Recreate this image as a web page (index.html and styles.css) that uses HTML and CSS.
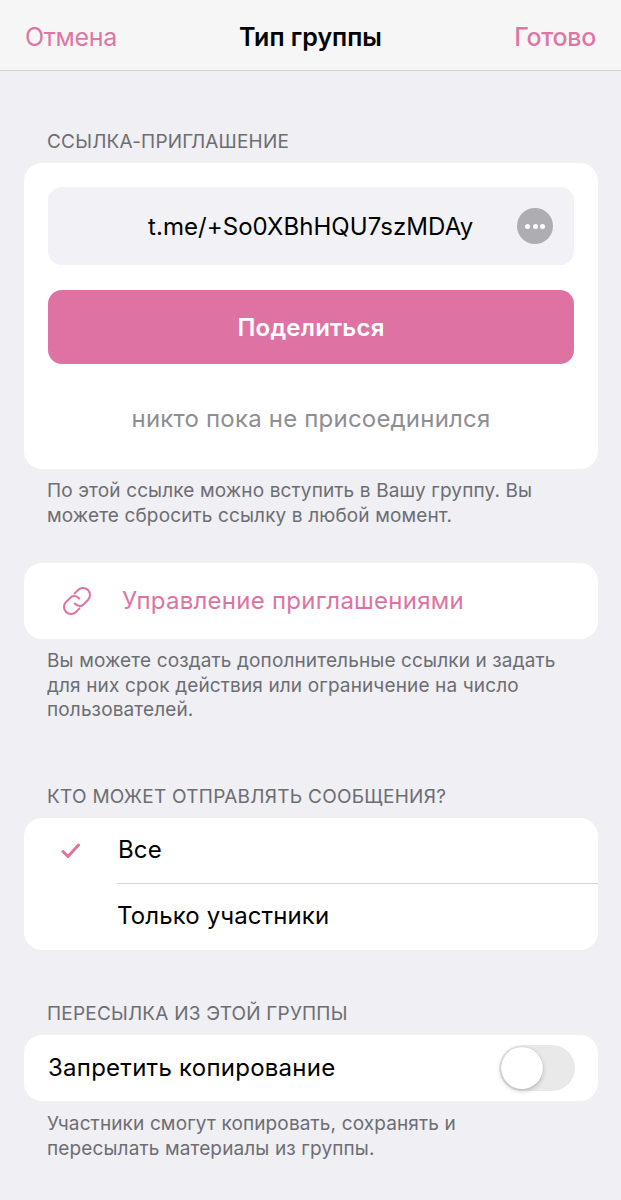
FILE: index.html
```html
<!DOCTYPE html>
<html lang="ru">
<head>
    <meta charset="UTF-8">
    <meta name="viewport" content="width=device-width, initial-scale=1.0">
    <title>Тип группы</title>
    <link rel="stylesheet" href="styles.css">
</head>
<body>
    <header class="nav-bar">
        <a class="nav-link">Отмена</a>
        <h1 class="nav-title">Тип группы</h1>
        <a class="nav-link nav-done">Готово</a>
    </header>

    <main class="content">
        <h2 class="section-label label-invite">ССЫЛКА-ПРИГЛАШЕНИЕ</h2>
        <section class="card invite-card">
            <div class="link-field">
                <span class="link-text">t.me/+So0XBhHQU7szMDAy</span>
                <span class="more-btn"><i></i><i></i><i></i></span>
            </div>
            <button class="share-btn">Поделиться</button>
            <p class="invite-status">никто пока не присоединился</p>
        </section>
        <p class="section-note note-invite">По этой ссылке можно вступить в Вашу группу. Вы<br>можете сбросить ссылку в любой момент.</p>

        <section class="card manage-row">
            <svg class="link-icon" width="30" height="30" viewBox="0 0 30 30" fill="none">
                <path d="M12.5 7.6 L16.05 4.05 A7 7 0 0 1 25.95 13.95 L20.45 19.45 A7 7 0 0 1 12.8 17.5"/>
                <path d="M17.5 22.4 L13.95 25.95 A7 7 0 0 1 4.05 16.05 L9.55 10.55 A7 7 0 0 1 17.2 12.5"/>
            </svg>
            <span class="manage-text">Управление приглашениями</span>
        </section>
        <p class="section-note note-manage">Вы можете создать дополнительные ссылки и задать<br>для них срок действия или ограничение на число<br>пользователей.</p>

        <h2 class="section-label label-who">КТО МОЖЕТ ОТПРАВЛЯТЬ СООБЩЕНИЯ?</h2>
        <section class="card option-list">
            <div class="option-row">
                <svg class="check-icon" width="20" height="16" viewBox="0 0 20 16" fill="none">
                    <path d="M2 8.5 L7 13.5 L17.5 2"/>
                </svg>
                <span class="option-text">Все</span>
            </div>
            <div class="option-row option-second">
                <span class="option-text">Только участники</span>
            </div>
        </section>

        <h2 class="section-label label-forward">ПЕРЕСЫЛКА ИЗ ЭТОЙ ГРУППЫ</h2>
        <section class="card toggle-row">
            <span class="toggle-text">Запретить копирование</span>
            <span class="toggle"><span class="toggle-knob"></span></span>
        </section>
        <p class="section-note note-forward">Участники смогут копировать, сохранять и<br>пересылать материалы из группы.</p>
    </main>
</body>
</html>
```

FILE: styles.css
```css
* {
    margin: 0;
    padding: 0;
    box-sizing: border-box;
}

body {
    font-family: Inter, "Noto Sans", sans-serif;
    background: #efeff4;
    color: #000;
    min-height: 100vh;
    overflow: hidden;
}

.nav-bar {
    height: 71px;
    padding: 3px 25px 0;
    display: grid;
    grid-template-columns: 1fr auto 1fr;
    align-items: center;
    background: #f6f6f7;
    border-bottom: 1px solid #d3d3d8;
}

.nav-link {
    color: #de76a4;
    font-size: 25px;
    letter-spacing: -0.3px;
}

.nav-done {
    font-weight: 500;
    text-align: right;
}

.nav-title {
    font-size: 25px;
    font-weight: 600;
    letter-spacing: 0;
}

.content {
    padding: 0 23px 0 24px;
}

.section-label {
    padding-left: 23px;
    font-size: 19px;
    line-height: 22px;
    font-weight: 400;
    color: #6d6d72;
    letter-spacing: 0.2px;
}

.label-invite {
    margin-top: 60px;
    margin-bottom: 10px;
}

.label-who {
    margin-top: 63px;
    margin-bottom: 10.5px;
    letter-spacing: 0.27px;
}

.label-forward {
    margin-top: 53px;
    margin-bottom: 10px;
}

.card {
    background: #fff;
    border-radius: 18px;
}

.invite-card {
    height: 306px;
    padding: 24px;
}

.link-field {
    height: 78px;
    padding: 0 21px 0 100px;
    display: flex;
    align-items: center;
    justify-content: space-between;
    background: #f1f1f6;
    border-radius: 14px;
}

.link-text {
    font-size: 24px;
    letter-spacing: 0.06px;
}

.more-btn {
    width: 36px;
    height: 36px;
    display: flex;
    align-items: center;
    justify-content: center;
    gap: 2.5px;
    background: #aeaeb2;
    border-radius: 50%;
}

.more-btn i {
    width: 5px;
    height: 5px;
    background: #fff;
    border-radius: 50%;
}

.share-btn {
    display: block;
    width: 100%;
    height: 74px;
    margin-top: 25px;
    background: #de73a3;
    color: #fff;
    border: none;
    border-radius: 14px;
    font-family: inherit;
    font-size: 24px;
    font-weight: 600;
    letter-spacing: 0.2px;
}

.invite-status {
    margin-top: 40px;
    text-align: center;
    font-size: 24px;
    line-height: 30px;
    color: #8e8e93;
    letter-spacing: 0.2px;
}

.section-note {
    padding: 0 23px;
    font-size: 19px;
    line-height: 24.5px;
    color: #6d6d72;
    letter-spacing: 0.13px;
    white-space: nowrap;
}

.note-invite {
    margin-top: 10px;
    margin-bottom: 35px;
}

.note-manage {
    margin-top: 10px;
}

.note-forward {
    margin-top: 11px;
}

.manage-row {
    height: 76px;
    padding: 0 0 0 38px;
    display: flex;
    align-items: center;
}

.link-icon {
    stroke: #de73a3;
    stroke-width: 2;
    stroke-linecap: round;
}

.manage-text {
    margin-left: 30px;
    padding-bottom: 2px;
    color: #de73a3;
    font-size: 24px;
    letter-spacing: 0.25px;
}

.option-list {
    height: 132px;
}

.option-row {
    height: 65px;
    display: flex;
    align-items: center;
    padding-left: 37px;
}

.option-second {
    height: 67px;
    margin-left: 93px;
    padding-left: 0;
    border-top: 1px solid #d5d5d8;
}

.check-icon {
    stroke: #de73a3;
    stroke-width: 3;
    stroke-linecap: round;
    stroke-linejoin: round;
}

.option-text {
    padding-bottom: 3px;
    font-size: 24px;
    letter-spacing: 0.12px;
}

.option-row:first-child .option-text {
    margin-left: 37px;
}

.toggle-row {
    height: 66px;
    padding: 0 23px 0 24px;
    display: flex;
    align-items: center;
    justify-content: space-between;
}

.toggle-text {
    padding-bottom: 2px;
    font-size: 24px;
    letter-spacing: 0.25px;
}

.toggle {
    width: 76px;
    height: 46px;
    padding: 2px;
    background: #e9e9ea;
    border-radius: 23px;
}

.toggle-knob {
    display: block;
    width: 42px;
    height: 42px;
    background: #fff;
    border-radius: 50%;
    box-shadow: 0 2px 5px rgba(0, 0, 0, 0.2), 0 0 1px rgba(0, 0, 0, 0.2);
}
```
